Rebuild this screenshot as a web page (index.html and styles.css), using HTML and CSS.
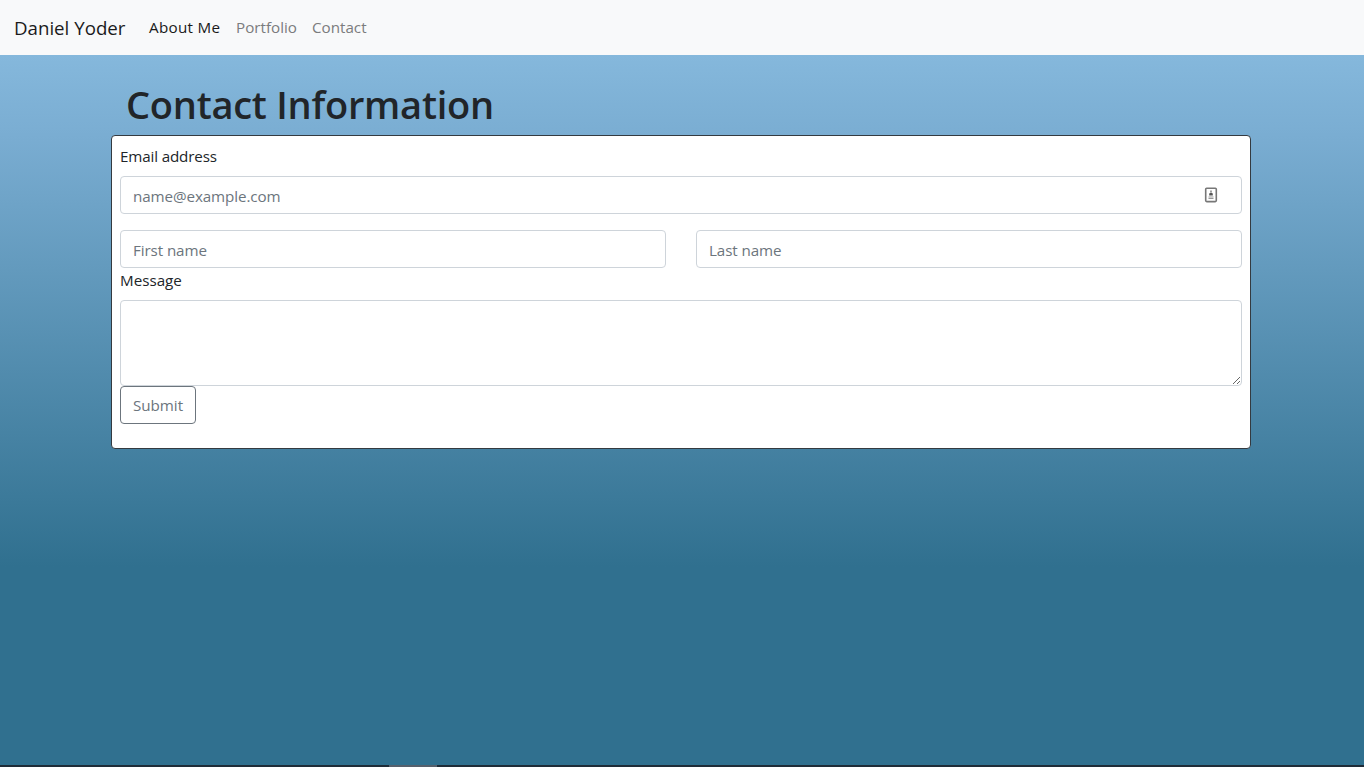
FILE: index.html
```html
<!DOCTYPE html>
<html lang="en">
<head>
<meta charset="utf-8">
<title>Contact Information</title>
<link rel="stylesheet" href="styles.css">
</head>
<body>
<nav class="navbar">
  <a class="brand">Daniel Yoder</a>
  <a class="nav-link active">About Me</a>
  <a class="nav-link portfolio">Portfolio</a>
  <a class="nav-link contact">Contact</a>
</nav>
<main class="container">
  <h1 class="title">Contact Information</h1>
  <form class="panel">
    <label class="label email-label" for="email">Email address</label>
    <div class="email-field">
      <input class="control email" id="email" placeholder="name@example.com">
      <svg class="autofill" viewBox="0 0 14 16" width="14" height="16">
        <rect x="1.7" y="1.2" width="10.6" height="13.4" rx="1" fill="#fff" stroke="#777" stroke-width="1.6"/>
        <path d="M7 3.4v2" stroke="#777" stroke-width="1.4"/>
        <path d="M5.2 8.4V6.4q1.8-1.5 3.6 0v2z" fill="#555"/>
        <path d="M4.5 10h5M4.5 11.5h5" stroke="#999" stroke-width="1.1"/>
      </svg>
    </div>
    <div class="names">
      <input class="control first" placeholder="First name" aria-label="First name">
      <input class="control last" placeholder="Last name" aria-label="Last name">
    </div>
    <label class="label message-label" for="message">Message</label>
    <textarea class="control message" id="message"></textarea>
    <button class="submit" type="button">Submit</button>
  </form>
</main>
<footer class="taskbar"><div class="task"></div></footer>
</body>
</html>
```

FILE: styles.css
```css
* { box-sizing: border-box; }
body {
  margin: 0;
  height: 767px;
  overflow: hidden;
  display: flex;
  flex-direction: column;
  font: 15.2px/24px "Open Sans", sans-serif;
  color: #212529;
  background: linear-gradient(#85b8dc 55px, #7aadd2 135px, #30708f 567px);
}
.navbar {
  height: 55px;
  flex: none;
  display: flex;
  align-items: center;
  padding: 0 0 1px 14px;
  background: #f8f9fa;
}
.brand { width: 135px; padding-top: 1px; font-size: 18.7px; color: #1b1b1c; white-space: nowrap; }
.nav-link { color: #7b7c7d; white-space: nowrap; }
.nav-link.active { width: 87px; color: #191919; letter-spacing: 0.3px; }
.portfolio { width: 76px; }
.container { width: 1140px; margin-left: 111px; flex: 1; }
.title {
  margin: 25px 0 7px 15px;
  font-size: 38px;
  line-height: 48px;
  font-weight: 600;
  letter-spacing: -0.25px;
  color: #212529;
}
.panel {
  height: 314px;
  padding: 8px;
  background: #fff;
  border: 1px solid #343a40;
  border-radius: 4px;
  display: flex;
  flex-direction: column;
  align-items: flex-start;
}
.label { height: 24px; flex: none; margin-bottom: 8px; }
.email-label { letter-spacing: -0.15px; }
.control {
  display: block;
  width: 100%;
  height: 38px;
  padding: 3px 12px 1px;
  margin: 0;
  font: inherit;
  letter-spacing: -0.1px;
  color: #495057;
  background: #fff;
  border: 1px solid #ced4da;
  border-radius: 4px;
}
.control::placeholder { color: #6c757d; opacity: 1; }
.email-field { width: 100%; position: relative; margin-bottom: 16px; }
.autofill { position: absolute; right: 24px; top: 11px; }
.names { width: 100%; display: flex; gap: 30px; }
.message { height: 86px; flex: none; }
.submit {
  width: 76px;
  height: 38px;
  flex: none;
  padding: 0;
  font: inherit;
  color: #6c757d;
  background: #fff;
  border: 1px solid #6c757d;
  border-radius: 4px;
}
.taskbar { height: 2px; flex: none; background: #1f2c38; }
.task { width: 48px; height: 2px; margin-left: 389px; background: #55606c; }
```
